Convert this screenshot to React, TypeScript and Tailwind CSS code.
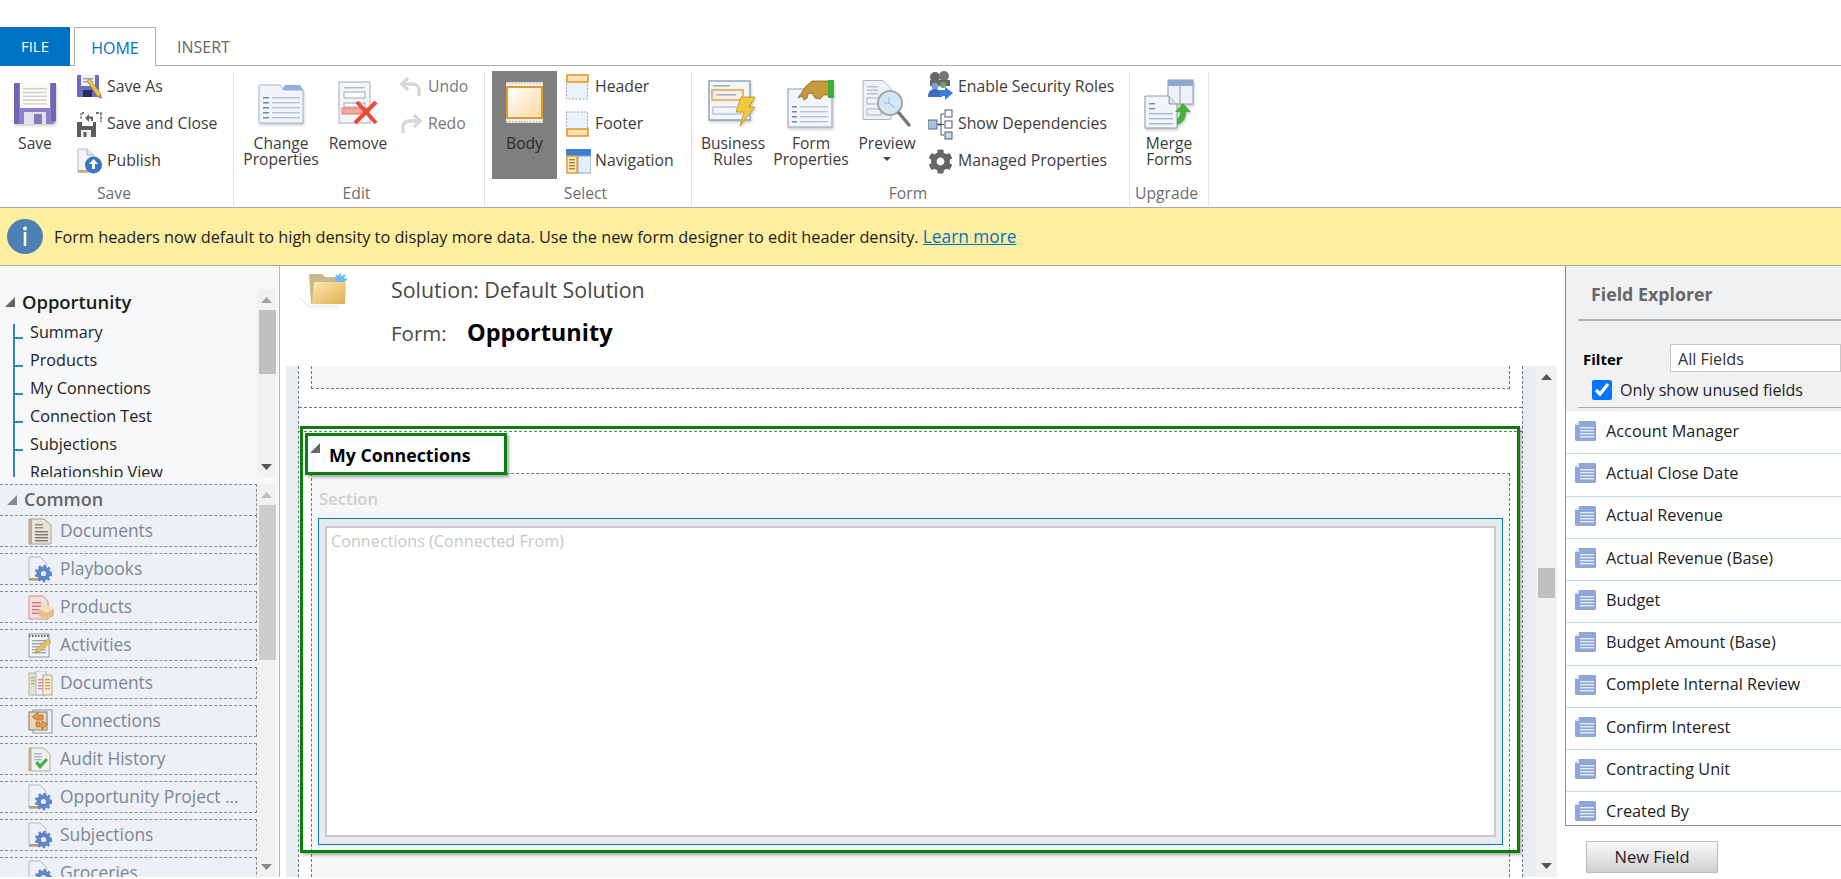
import React from "react";
import { FaCog } from "react-icons/fa";

const Up = ({ c = "#8a8a8a" }: { c?: string }) => (
  <svg width="11" height="6" viewBox="0 0 11 6"><polygon points="5.5,0 11,6 0,6" fill={c} /></svg>
);
const Down = ({ c = "#555" }: { c?: string }) => (
  <svg width="11" height="6" viewBox="0 0 11 6"><polygon points="0,0 11,0 5.5,6" fill={c} /></svg>
);
const Corner = ({ c = "#555" }: { c?: string }) => (
  <svg width="10" height="10" viewBox="0 0 10 10"><polygon points="10,0 10,10 0,10" fill={c} /></svg>
);

const Lines = ({ x, y, w, n, gap = 4, c = "#9fb0c8" }: { x: number; y: number; w: number; n: number; gap?: number; c?: string }) => (
  <>
    {Array.from({ length: n }).map((_, i) => (
      <rect key={i} x={x} y={y + i * gap} width={w} height="1.4" fill={c} />
    ))}
  </>
);

const soft = "drop-shadow-[1px_2px_1px_rgba(0,0,0,0.18)]";

const SaveBig = () => (
  <svg width="44" height="44" viewBox="0 0 44 44" className={soft}>
    <path d="M1 1h42v38l-3 3H1z" fill="#8d7fca" />
    <rect x="1" y="1" width="5" height="41" fill="#7364b4" />
    <rect x="38" y="1" width="5" height="38" fill="#7364b4" />
    <rect x="7" y="1" width="30" height="25" fill="#fbfaf7" />
    <Lines x={10} y={6} w={24} n={5} gap={3.8} c="#cfcdc8" />
    <rect x="11" y="30" width="22" height="12" fill="#e4e0f0" />
    <rect x="21" y="32" width="8" height="10" fill="#8578b8" />
  </svg>
);
const SaveAsIcon = () => (
  <svg width="25" height="24" viewBox="0 0 25 24">
    <rect x="0" y="0" width="22" height="22" fill="#6a6cc0" />
    <rect x="4" y="0" width="14" height="11" fill="#eef0f6" />
    <Lines x={6} y={3} w={10} n={2} gap={3} c="#9aa0b8" />
    <rect x="6" y="15" width="9" height="7" fill="#2a2d58" />
    <path d="M10 6l3-2 11 15-3 3z" fill="#e7c04c" stroke="#a6812a" strokeWidth=".6" />
    <path d="M21 22l3-3 1 5z" fill="#d9604c" />
  </svg>
);
const SaveCloseIcon = () => (
  <svg width="25" height="25" viewBox="0 0 25 25">
    <path d="M0 10h5v4h11v-4h3v15H0z" fill="#5d5d5d" />
    <rect x="4" y="18" width="10" height="7" fill="#f2f2f2" />
    <rect x="6.5" y="20" width="3" height="5" fill="#5d5d5d" />
    <path d="M8 6l4-4v2.4h4V9h-2V6.8h-2V10z" fill="#666" />
    <path d="M19 1h5v9" fill="none" stroke="#444" strokeWidth="1.3" strokeDasharray="3 1.2" />
    <path d="M7 1H4v6" fill="none" stroke="#444" strokeWidth="1.3" strokeDasharray="2 1.2" />
  </svg>
);
const PublishIcon = () => (
  <svg width="25" height="26" viewBox="0 0 25 26">
    <path d="M1 1h9l7 6v17H1z" fill="#f4f6fb" stroke="#a9b6c9" />
    <path d="M10 1v6h7" fill="#dbe3ee" stroke="#a9b6c9" />
    <rect x="1" y="22" width="10" height="2.5" fill="#c9a77c" />
    <circle cx="16.5" cy="17" r="8.5" fill="#3a76c4" />
    <path d="M16.5 11l4.5 5h-3v5h-3v-5h-3z" fill="#fff" />
  </svg>
);
const ChangePropsIcon = () => (
  <svg width="47" height="42" viewBox="0 0 47 42" className={soft}>
    <path d="M1 8V2h21l4 5h19v33H1z" fill="#f1f4f9" stroke="#a7b5cc" />
    <path d="M24 7l3-5h15l3 5z" fill="#93aede" />
    <rect x="5" y="14" width="6" height="1.5" fill="#6f89ad" />
    <rect x="5" y="19" width="6" height="1.5" fill="#6f89ad" />
    <rect x="5" y="24" width="6" height="1.5" fill="#6f89ad" />
    <rect x="5" y="29" width="6" height="1.5" fill="#6f89ad" />
    <rect x="5" y="34" width="6" height="1.5" fill="#6f89ad" />
    <Lines x={14} y={14} w={28} n={5} gap={5} c="#b5c3d6" />
  </svg>
);
const RemoveIcon = () => (
  <svg width="41" height="46" viewBox="0 0 41 46">
    <rect x="1" y="1" width="31" height="41" fill="#f3f5f9" stroke="#9fadc0" />
    <Lines x={6} y={6} w={21} n={1} c="#aab7cc" />
    <rect x="6" y="11" width="21" height="6" fill="#fff" stroke="#9aa8bd" />
    <rect x="6" y="22" width="21" height="4" fill="#fff" stroke="#9aa8bd" />
    <rect x="4" y="27" width="25" height="6" fill="#f4a89c" stroke="#ef7a68" />
    <path d="M19 21l19 21M38 21L17 42" stroke="#ec4a3c" strokeWidth="4" />
  </svg>
);
const BodyIcon = () => (
  <svg width="37" height="42" viewBox="0 0 37 42">
    <defs>
      <linearGradient id="bg1" x1="0" y1="0" x2="1" y2="1">
        <stop offset="0" stopColor="#fff" />
        <stop offset="1" stopColor="#fbd8a0" />
      </linearGradient>
    </defs>
    <rect x="0" y="0" width="37" height="5" fill="#f1f1f1" />
    <rect x="0" y="36" width="37" height="5" fill="#f1f1f1" />
    <rect x="1" y="5" width="35" height="31" fill="url(#bg1)" stroke="#e09a2c" strokeWidth="2" />
    <line x1="0" y1="1" x2="37" y2="1" stroke="#999" strokeWidth="1" strokeDasharray="1.5 1.5" />
    <line x1="0" y1="40" x2="37" y2="40" stroke="#999" strokeWidth="1" strokeDasharray="1.5 1.5" />
  </svg>
);
const HeaderIcon = () => (
  <svg width="24" height="26" viewBox="0 0 24 26">
    <rect x=".5" y="7" width="21" height="18" fill="#eaf2fb" stroke="#9aa3b5" strokeDasharray="2 1.5" />
    <rect x="1" y="1" width="21" height="7" fill="#fbe3b5" stroke="#e39c2b" strokeWidth="1.6" />
  </svg>
);
const FooterIcon = () => (
  <svg width="24" height="26" viewBox="0 0 24 26">
    <rect x=".5" y="1" width="21" height="18" fill="#eaf2fb" stroke="#9aa3b5" strokeDasharray="2 1.5" />
    <rect x="1" y="18" width="21" height="7" fill="#fbe3b5" stroke="#e39c2b" strokeWidth="1.6" />
  </svg>
);
const NavIcon = () => (
  <svg width="25" height="25" viewBox="0 0 25 25">
    <rect x="0" y="0" width="25" height="7" fill="#3f7fd0" />
    <rect x="12" y="7" width="13" height="17" fill="#e6f0fb" stroke="#7da3d3" />
    <rect x="1" y="7" width="10" height="17" fill="#fbe7c4" stroke="#e39c2b" strokeWidth="1.5" />
    <Lines x={3} y={10} w={6} n={4} gap={3} c="#b77f2b" />
  </svg>
);
const BizRulesIcon = () => (
  <svg width="50" height="48" viewBox="0 0 50 48" className={soft}>
    <rect x="1" y="1" width="41" height="39" fill="#f2f5fa" stroke="#8ea0b9" strokeWidth="1.4" />
    <rect x="5" y="5" width="17" height="1.6" fill="#9fb0c8" />
    <rect x="4" y="10" width="31" height="10" fill="#f8f3ea" stroke="#e0a24a" strokeWidth="1.5" />
    <rect x="8" y="14" width="20" height="1.6" fill="#9fb0c8" />
    <rect x="5" y="27" width="28" height="7" fill="none" stroke="#9fb0c8" />
    <path d="M33 17h14l-6 10h6L32 46l4-14h-8z" fill="#f2c93e" stroke="#b78d22" strokeWidth=".8" />
  </svg>
);
const FormPropsIcon = () => (
  <svg width="48" height="48" viewBox="0 0 48 48" className={soft}>
    <rect x="1" y="9" width="44" height="38" fill="#f2f5fa" stroke="#aab7cc" strokeWidth="1.4" />
    <rect x="5" y="26" width="5" height="1.5" fill="#6f89ad" />
    <rect x="5" y="31" width="5" height="1.5" fill="#6f89ad" />
    <rect x="5" y="36" width="5" height="1.5" fill="#6f89ad" />
    <rect x="5" y="41" width="5" height="1.5" fill="#6f89ad" />
    <Lines x={13} y={26} w={28} n={4} gap={5} c="#b5c3d6" />
    <path d="M11 18l8-12 6-5h17v14h-5l-4 4-5-1-3-5-4 1-1 4-3 2-2-4z" fill="#c49a3b" stroke="#7a5a18" strokeWidth=".7" />
    <rect x="41" y="0" width="6" height="18" fill="#3fae3a" />
  </svg>
);
const PreviewIcon = () => (
  <svg width="50" height="48" viewBox="0 0 50 48">
    <path d="M1 .5h20l8 8v31H1z" fill="#eef1f7" stroke="#a9b6c9" />
    <Lines x={5} y={6} w={11} n={3} gap={3.5} c="#b0bdd0" />
    <rect x="5" y="18" width="13" height="6" fill="none" stroke="#a9b6c9" />
    <rect x="5" y="29" width="14" height="6" fill="none" stroke="#a9b6c9" />
    <circle cx="28" cy="23" r="12" fill="#d2e6f6" stroke="#a6a6a6" strokeWidth="2" />
    <path d="M22 23h5v-6M27 23l6 5" stroke="#8bb4da" fill="none" />
    <path d="M37 33l10 12" stroke="#777" strokeWidth="3.5" strokeLinecap="round" />
  </svg>
);
const SecurityIcon = () => (
  <svg width="26" height="33" viewBox="0 0 26 33">
    <circle cx="7" cy="6" r="5" fill="#666" />
    <circle cx="16" cy="5" r="5" fill="#777" />
    <path d="M2 9h20v6H2z" fill="#666" />
    <circle cx="7" cy="15" r="3.5" fill="#7d9ed4" />
    <circle cx="15" cy="14" r="3" fill="#6f9f6a" />
    <path d="M0 26c0-6 3-8 7-8s7 2 7 8z" fill="#3c6cc4" />
    <path d="M12 19h5v-3l8 6-8 7v-4h-5z" fill="#3c7ed8" />
  </svg>
);
const DepsIcon = () => (
  <svg width="25" height="31" viewBox="0 0 25 31">
    <rect x="0" y="11" width="9" height="9" fill="#a8c0de" stroke="#5b6f8c" />
    <path d="M9 15.5h7M13 5v21M13 5h3M13 26h3" stroke="#555" fill="none" />
    <rect x="17" y="1" width="7" height="7" fill="#fff" stroke="#4d5d75" />
    <rect x="17" y="12" width="7" height="7" fill="#fff" stroke="#4d5d75" />
    <rect x="17" y="23" width="7" height="7" fill="#cfd8e6" stroke="#4d5d75" />
    <path d="M10 15.5h3" stroke="#3d5d8f" strokeWidth="2" />
  </svg>
);
const MergeIcon = () => (
  <svg width="50" height="50" viewBox="0 0 50 50" className={soft}>
    <rect x="24" y="1" width="25" height="24" fill="#eef2f8" stroke="#8b9ab0" />
    <rect x="24" y="1" width="25" height="6" fill="#8fa8cf" />
    <line x1="36" y1="7" x2="36" y2="25" stroke="#8b9ab0" />
    <path d="M1 17h24l8 8v24H1z" fill="#f2f5fa" stroke="#8b9ab0" />
    <path d="M25 17v8h8" fill="#d6deea" stroke="#8b9ab0" />
    <Lines x={5} y={24} w={6} n={2} gap={5} c="#6f89ad" />
    <Lines x={5} y={34} w={24} n={3} gap={5} c="#a9b7cb" />
    <path d="M33 46c7-2 9-8 9-13h5l-8-9-8 9h5c0 3-1 5-3 7z" fill="#46b03e" />
  </svg>
);
const InfoIcon = () => (
  <svg width="36" height="35" viewBox="0 0 36 35">
    <ellipse cx="18" cy="17.5" rx="18" ry="17.5" fill="#4f80b4" />
    <circle cx="18" cy="9.5" r="2" fill="#fff" />
    <rect x="16.7" y="13" width="2.6" height="14" fill="#fff" />
  </svg>
);
const FolderIcon = () => (
  <svg width="50" height="42" viewBox="0 0 50 42">
    <defs>
      <linearGradient id="fo" x1="0" y1="0" x2="1" y2="1">
        <stop offset="0" stopColor="#fbeaae" />
        <stop offset="1" stopColor="#e0ad4f" />
      </linearGradient>
      <linearGradient id="fs" x1="0" y1="0" x2="0" y2="1">
        <stop offset="0" stopColor="#dcdcdc" />
        <stop offset="1" stopColor="#ffffff" />
      </linearGradient>
    </defs>
    <path d="M0 27l10 8h30v6H12z" fill="url(#fs)" />
    <path d="M10 4h13l3 3h18v27H12z" fill="#c9b88a" />
    <path d="M15 12h32l-1 22H13z" fill="url(#fo)" />
    <path d="M36 7l2-3 1 2 3-4 0 4 5-2-2 4 4 1-4 3H37z" fill="#6fb9ee" />
  </svg>
);

const FieldIcon = () => (
  <svg width="21" height="20" viewBox="0 0 21 20">
    <path d="M0 4l4-4h16l1 1v18l-1 1H1l-1-1z" fill="#8ea6d8" />
    <path d="M0 4l4-4v4z" fill="#dfe7f6" />
    <Lines x={5} y={6} w={14} n={4} gap={3} c="#e3eafa" />
  </svg>
);

const DocGear = () => (
  <svg width="24" height="27" viewBox="0 0 24 27">
    <path d="M1 1h11l6 6v17H1z" fill="#eef2f8" stroke="#aeb8c8" />
    <rect x="1" y="22" width="12" height="2.5" fill="#c49a6c" />
    <circle cx="15.5" cy="17.5" r="7" fill="#5f86c8" />
    <circle cx="15.5" cy="17.5" r="7.5" fill="none" stroke="#5f86c8" strokeWidth="2.5" strokeDasharray="2.5 2.5" />
    <circle cx="15.5" cy="17.5" r="2.6" fill="#e8eefb" />
  </svg>
);
const DocLines = () => (
  <svg width="24" height="27" viewBox="0 0 24 27">
    <path d="M1 1h15l7 6v19H1z" fill="#e8e3d7" stroke="#a9a294" />
    <rect x="1" y="1" width="3" height="25" fill="#c4ab8c" />
    <Lines x={7} y={6} w={8} n={2} gap={3} c="#888" />
    <Lines x={7} y={13} w={13} n={4} gap={3} c="#777" />
  </svg>
);
const ProdIcon = () => (
  <svg width="26" height="25" viewBox="0 0 26 25">
    <path d="M1 1h14l5 5v18H1z" fill="#f4dede" stroke="#d58d8d" />
    <Lines x={4} y={7} w={9} n={4} gap={3.5} c="#d07474" />
    <path d="M11 14l7-4 8 4v7l-8 4-7-4z" fill="#e0c090" />
    <path d="M11 14l7 4 8-4-8-4z" fill="#f1dfba" />
  </svg>
);
const ActivIcon = () => (
  <svg width="24" height="25" viewBox="0 0 24 25">
    <rect x="1" y="1" width="20" height="23" fill="#f1f3f7" stroke="#8996ad" />
    <line x1="1" y1="3" x2="21" y2="3" stroke="#666" strokeWidth="2" strokeDasharray="1.5 1.5" />
    <Lines x={4} y={7} w={14} n={5} gap={3} c="#9aa5b8" />
    <path d="M7 20l2-5 11-9 3 3-11 9z" fill="#e9c25c" stroke="#b1852c" strokeWidth=".6" />
  </svg>
);
const DocsIcon = () => (
  <svg width="25" height="25" viewBox="0 0 25 25">
    <rect x="1" y="2" width="11" height="22" fill="#e6e2d6" stroke="#b8b0a0" />
    <rect x="8" y="0" width="10" height="24" fill="#eef1f6" stroke="#aeb8c8" />
    <rect x="15" y="4" width="9" height="20" fill="#f1ead8" stroke="#b7a98a" />
    <Lines x={3} y={6} w={4} n={3} gap={3} c="#9ac27e" />
    <Lines x={10} y={8} w={5} n={4} gap={3} c="#d88" />
    <Lines x={17} y={8} w={5} n={4} gap={3} c="#cda95e" />
  </svg>
);
const ConnIcon = () => (
  <svg width="25" height="25" viewBox="0 0 25 25">
    <rect x="5" y="1" width="19" height="23" fill="#edf0f5" stroke="#8996ad" />
    <rect x="1" y="3" width="18" height="18" fill="#e8d6be" stroke="#8a7a66" />
    <path d="M4 8l6-5v3h5v5h-4v-2H10v3z" fill="#e0994a" stroke="#a86a22" strokeWidth=".6" />
    <path d="M20 15l-6 6v-3H8v-5h4v2h2v-3z" fill="#e0994a" stroke="#a86a22" strokeWidth=".6" />
  </svg>
);
const AuditIcon = () => (
  <svg width="24" height="25" viewBox="0 0 24 25">
    <path d="M1 1h14l7 6v17H1z" fill="#f0f1ec" stroke="#b8ac98" />
    <rect x="1" y="1" width="2.5" height="23" fill="#c7a98a" />
    <Lines x={6} y={6} w={8} n={3} gap={3} c="#a9b7cb" />
    <path d="M7 16l3-2 2 3 6-6 2 2-8 9z" fill="#3fae4a" />
  </svg>
);

const Big = ({ icon, label, w, ml, caret }: { icon: React.ReactNode; label: React.ReactNode; w: string; ml: string; caret?: boolean }) => (
  <div className={`flex flex-col items-center shrink-0 ${w} ${ml}`}>
    <div className="h-[63px] flex items-center justify-center">{icon}</div>
    <div className="text-center leading-[16px] text-[15.6px] text-[#3c3c3c] whitespace-nowrap">
      {label}
      {caret && (
        <div className="flex justify-center mt-[6px]">
          <svg width="8" height="4" viewBox="0 0 8 4"><polygon points="0,0 8,0 4,4" fill="#444" /></svg>
        </div>
      )}
    </div>
  </div>
);
const Small = ({ icon, label, w, c = "text-[#3c3c3c]" }: { icon: React.ReactNode; label: string; w: string; c?: string }) => (
  <div className="h-6 flex items-center whitespace-nowrap text-[15.8px]">
    <div className={`${w} flex items-center justify-start shrink-0`}>{icon}</div>
    <span className={c}>{label}</span>
  </div>
);
const SmallCol = ({ ml, children }: { ml: string; children: React.ReactNode }) => (
  <div className={`flex flex-col gap-[13px] pt-[3px] shrink-0 ${ml}`}>{children}</div>
);
const Group = ({ w, label, children }: { w: string; label: string; children: React.ReactNode }) => (
  <div className={`${w} shrink-0 h-[134px] mt-[6px] flex flex-col border-r border-[#e2e2e2]`}>
    <div className="flex-1 flex items-start min-h-0">{children}</div>
    <div className="h-[24px] flex items-center justify-center pr-[5px] text-[15.7px] text-[#6e6e6e]">{label}</div>
  </div>
);

const Ribbon = () => (
  <div className="h-[141px] flex shrink-0">
    <Group w="w-[234px]" label="Save">
      <Big icon={<SaveBig />} label="Save" w="w-[70px]" ml="ml-0" />
      <SmallCol ml="ml-[7px]">
        <Small w="w-[30px]" icon={<SaveAsIcon />} label="Save As" />
        <Small w="w-[30px]" icon={<SaveCloseIcon />} label="Save and Close" />
        <Small w="w-[30px]" icon={<PublishIcon />} label="Publish" />
      </SmallCol>
    </Group>
    <Group w="w-[251px]" label="Edit">
      <Big icon={<ChangePropsIcon />} label={<>Change<br />Properties</>} w="w-[76px]" ml="ml-[9px]" />
      <Big icon={<RemoveIcon />} label="Remove" w="w-[70px]" ml="ml-[4px]" />
      <SmallCol ml="ml-[7px]">
        <Small w="w-[28px]" c="text-[#777]" icon={
          <svg width="22" height="20" viewBox="0 0 22 20" fill="none" stroke="#d8d8d8" strokeWidth="3.5"><path d="M8 1L2 7l6 6" /><path d="M2 7h11a6 6 0 0 1 6 6v6" /></svg>
        } label="Undo" />
        <Small w="w-[28px]" c="text-[#777]" icon={
          <svg width="22" height="20" viewBox="0 0 22 20" fill="none" stroke="#d8d8d8" strokeWidth="3.5"><path d="M14 1l6 6-6 6" /><path d="M20 7H9a6 6 0 0 0-6 6v6" /></svg>
        } label="Redo" />
      </SmallCol>
    </Group>
    <Group w="w-[207px]" label="Select">
      <div className="ml-[7px] -mt-px w-[65px] h-[108px] bg-[#7f7f7f] flex flex-col items-center shrink-0">
        <div className="h-[64px] flex items-center justify-center"><BodyIcon /></div>
        <div className="leading-[16px] text-[15.6px] text-[#2b2b2b]">Body</div>
      </div>
      <SmallCol ml="ml-[9px]">
        <Small w="w-[29px]" icon={<HeaderIcon />} label="Header" />
        <Small w="w-[29px]" icon={<FooterIcon />} label="Footer" />
        <Small w="w-[29px]" icon={<NavIcon />} label="Navigation" />
      </SmallCol>
    </Group>
    <Group w="w-[438px]" label="Form">
      <Big icon={<BizRulesIcon />} label={<>Business<br />Rules</>} w="w-[76px]" ml="ml-[3px]" />
      <Big icon={<FormPropsIcon />} label={<>Form<br />Properties</>} w="w-[76px]" ml="ml-[2px]" />
      <Big icon={<PreviewIcon />} label="Preview" w="w-[70px]" ml="ml-[3px]" caret />
      <SmallCol ml="ml-[6px]">
        <Small w="w-[30px]" icon={<SecurityIcon />} label="Enable Security Roles" />
        <Small w="w-[30px]" icon={<DepsIcon />} label="Show Dependencies" />
        <Small w="w-[30px]" icon={<FaCog size={25} color="#666" />} label="Managed Properties" />
      </SmallCol>
    </Group>
    <Group w="w-[79px]" label="Upgrade">
      <Big icon={<MergeIcon />} label={<>Merge<br />Forms</>} w="w-[78px]" ml="ml-0" />
    </Group>
  </div>
);

const treeItems = ["Summary", "Products", "My Connections", "Connection Test", "Subjections", "Relationship View"];
const commonItems: [React.ReactNode, string][] = [
  [<DocLines />, "Documents"],
  [<DocGear />, "Playbooks"],
  [<ProdIcon />, "Products"],
  [<ActivIcon />, "Activities"],
  [<DocsIcon />, "Documents"],
  [<ConnIcon />, "Connections"],
  [<AuditIcon />, "Audit History"],
  [<DocGear />, "Opportunity Project ..."],
  [<DocGear />, "Subjections"],
  [<DocGear />, "Groceries"],
];
const fields = ["Account Manager", "Actual Close Date", "Actual Revenue", "Actual Revenue (Base)", "Budget", "Budget Amount (Base)", "Complete Internal Review", "Confirm Interest", "Contracting Unit", "Created By"];

const LeftPanel = () => (
  <div className="w-[280px] shrink-0 h-[611px] bg-[#f6f8fa] border-r border-[#b5b5b5] pt-[23px] flex flex-col">
    <div className="h-[188px] flex shrink-0">
      <div className="w-[257px] overflow-hidden">
        <div className="h-[26px] flex items-center pl-[5px]">
          <Corner c="#666" />
          <span className="ml-[7px] font-semibold text-[18.4px] text-[#1c1c1c]">Opportunity</span>
        </div>
        <div className="mt-[9px] ml-[13px] border-l-2 border-[#2f86d0] h-[153px]">
          {treeItems.map((t) => (
            <div key={t} className="h-[28px] flex items-start">
              <span className="mt-[13px] w-2 h-[2px] bg-[#2f86d0] shrink-0" />
              <span className="ml-[7px] leading-[16px] text-[16.2px] text-[#222] whitespace-nowrap">{t}</span>
            </div>
          ))}
        </div>
      </div>
      <div className="w-[19px] bg-[#f1f1f1] flex flex-col items-center">
        <div className="h-[21px] flex items-center"><Up c="#a3a3a3" /></div>
        <div className="w-[17px] ml-[2px] h-[64px] bg-[#c0c0c0]" />
        <div className="mt-auto h-[20px] flex items-center"><Down /></div>
      </div>
    </div>
    <div className="mt-[7px] flex-1 flex min-h-0">
      <div className="w-[257px] bg-[#edf0f5] overflow-hidden">
        <div className="h-[32px] border-t border-r border-dashed border-[#8a8a8a] flex items-center pl-[7px] pb-[2px] -mb-px">
          <Corner c="#8a8a8a" />
          <span className="ml-[7px] font-semibold text-[18px] text-[#666]">Common</span>
        </div>
        <div className="flex flex-col gap-[6px]">
          {commonItems.map(([ic, t], i) => (
            <div key={i} className="h-[32px] shrink-0 border-y border-r border-dashed border-[#8a8a8a] flex items-center pl-[28px]">
              <div className="w-[32px] shrink-0 flex items-center">{ic}</div>
              <span className="text-[17.4px] text-[#7d8794] whitespace-nowrap pb-[2px]">{t}</span>
            </div>
          ))}
        </div>
      </div>
      <div className="w-[19px] bg-[#f1f1f1] flex flex-col items-center">
        <div className="h-[21px] flex items-center"><Up c="#bdbdbd" /></div>
        <div className="w-[17px] ml-[2px] h-[155px] bg-[#cdcdcd]" />
        <div className="mt-auto h-[20px] flex items-center"><Down c="#8a8a8a" /></div>
      </div>
    </div>
  </div>
);

const Center = () => (
  <div className="flex-1 h-[611px] flex flex-col min-w-0">
    <div className="h-[100px] shrink-0 flex">
      <div className="w-[70px] pl-[19px] pt-[4px] shrink-0"><FolderIcon /></div>
      <div className="ml-[41px] flex flex-col">
        <div className="h-[48px] flex items-center text-[#484848] text-[21.4px]">Solution: Default Solution</div>
        <div className="h-[38px] flex items-center">
          <span className="text-[20.5px] text-[#484848] w-[76px]">Form:</span>
          <span className="text-[23.5px] font-bold text-black">Opportunity</span>
        </div>
      </div>
    </div>
    <div className="flex-1 flex pl-[6px] min-h-0">
      <div className="w-[12px] bg-[#e9ecf1] shrink-0" />
      <div className="relative w-[1225px] shrink-0 bg-white border-x border-dashed border-[#777] overflow-hidden flex flex-col">
        <div className="h-[42px] shrink-0 border-b border-dashed border-[#777] px-[12px]">
          <div className="h-[23px] bg-[#f5f6f8] border-x border-b border-dashed border-[#777]" />
        </div>
        <div className="h-[23px] shrink-0 bg-white" />
        <div className="flex-1 border-t border-dashed border-[#777] flex flex-col min-h-0">
          <div className="h-[41px] shrink-0 flex items-center pl-[30px] pt-[6px]">
            <span className="text-[17.8px] font-bold text-black">My Connections</span>
          </div>
          <div className="ml-[12px] mr-[12px] flex-1 bg-[#f5f6f8] border-t border-x border-dashed border-[#777] flex flex-col px-[6px] min-h-0">
            <div className="h-[44px] shrink-0 flex items-center pl-px pt-[5px] text-[16.7px] font-semibold text-[#cfcfcf]">Section</div>
            <div className="h-[327px] shrink-0 border border-[#0b78a8] bg-[#e7eaef] px-[6px] py-[7px] flex">
              <div className="flex-1 bg-white border-2 border-[#c9cacc] px-[4px] py-[3px] text-[16.2px] text-[#c8c8c8] leading-[20px]">Connections (Connected From)</div>
            </div>
          </div>
        </div>
        <div className="absolute left-[1px] top-[60px] w-[1220px] h-[427px] border-[3px] border-[#087f0e] shadow-[2px_2px_3px_rgba(0,0,0,0.3)]" />
        <div className="absolute left-[6px] top-[67px] w-[202px] h-[42px] border-[3px] border-[#087f0e] shadow-[2px_2px_3px_rgba(0,0,0,0.35)] flex items-start pl-[2px] pt-[7px]">
          <Corner c="#666" />
        </div>
      </div>
      <div className="w-[13px] bg-[#e9ecf1] shrink-0" />
      <div className="w-[21px] bg-[#f1f1f1] shrink-0 flex flex-col items-center">
        <div className="h-[22px] flex items-center"><Up c="#555" /></div>
        <div className="mt-[180px] w-[17px] h-[30px] bg-[#c0c0c0]" />
        <div className="mt-auto h-[22px] flex items-center"><Down /></div>
      </div>
    </div>
  </div>
);

const RightPanel = () => (
  <div className="w-[276px] shrink-0 h-[611px] flex flex-col">
    <div className="h-[560px] shrink-0 border-l border-b border-[#8f8f8f] flex flex-col bg-white">
      <div className="h-[146px] shrink-0 bg-[#f0f1f3] flex flex-col pl-[12px]">
        <div className="h-[55px] shrink-0 flex items-center pl-[13px] pt-[3px] border-b-2 border-[#b4b4b4] text-[17.8px] font-bold text-[#666]">Field Explorer</div>
        <div className="h-[51px] shrink-0 flex items-end">
          <span className="w-[92px] pl-[5px] pb-[2px] text-[15px] font-bold text-black">Filter</span>
          <div className="flex-1 h-[28px] bg-white border border-[#c6c6c6] flex items-center pl-[7px] pt-[2px] text-[16.2px] text-[#333]">All Fields</div>
        </div>
        <div className="h-[36px] shrink-0 flex items-center pl-[14px] border-b border-[#a9a9a9]">
          <input type="checkbox" checked readOnly className="w-5 h-5 accent-[#0075ff] m-0" />
          <span className="ml-[8px] pt-[2px] text-[16.1px] text-[#222]">Only show unused fields</span>
        </div>
      </div>
      <div className="flex-1 overflow-hidden min-h-0">
        {fields.map((f) => (
          <div key={f} className="h-[42.25px] border-b border-[#c4daf6] flex items-center pl-[9px] pb-[3px]">
            <FieldIcon />
            <span className="ml-[10px] text-[16.3px] text-[#222] whitespace-nowrap">{f}</span>
          </div>
        ))}
      </div>
    </div>
    <div className="mt-[15px] ml-[21px] w-[132px] h-[32px] border border-[#bdbdbd] bg-gradient-to-b from-[#fafafa] to-[#cfcfcf] flex items-center justify-center text-[16.5px] text-[#222]">New Field</div>
  </div>
);

export default function App() {
  return (
    <div className="w-[1841px] h-[879px] bg-white overflow-hidden flex flex-col font-['Open_Sans',sans-serif]">
      <div className="h-[66px] shrink-0 flex items-end border-b border-[#b0b0b0] pt-[27px]">
        <div className="w-[70px] h-[39px] -mb-px bg-[#0072c6] flex items-center justify-center text-white text-[15px]">FILE</div>
        <div className="ml-[4px] w-[82px] h-[39px] -mb-px bg-white border-t border-x border-[#b0b0b0] flex items-center justify-center text-[#0072c6] text-[16px] pt-[1px]">HOME</div>
        <div className="ml-[21px] h-[38px] flex items-center text-[#666] text-[16px] pt-[1px]">INSERT</div>
      </div>
      <Ribbon />
      <div className="h-[59px] shrink-0 bg-[#fdeea0] border-y border-[#a8a8a8] flex items-center pl-[7px]">
        <InfoIcon />
        <span className="ml-[11px] text-[16.3px] text-[#1c1c1c] whitespace-nowrap">
          Form headers now default to high density to display more data. Use the new form designer to edit header density.{" "}
          <span className="text-[#0072c6] underline text-[17.3px]">Learn more</span>
        </span>
      </div>
      <div className="flex shrink-0">
        <LeftPanel />
        <Center />
        <RightPanel />
      </div>
    </div>
  );
}
